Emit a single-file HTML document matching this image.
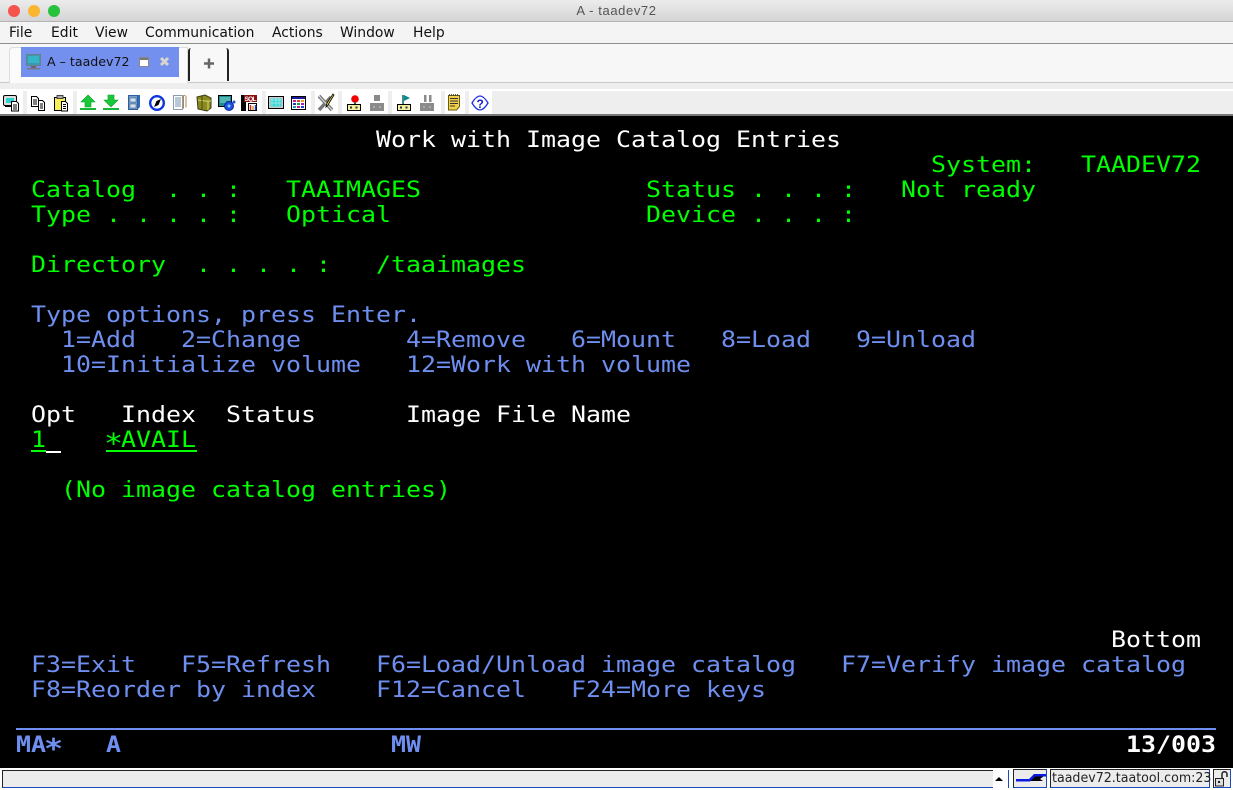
<!DOCTYPE html>
<html><head><meta charset="utf-8"><title>A - taadev72</title>
<style>
html,body{margin:0;padding:0;width:1233px;height:790px;overflow:hidden;background:#eee}
#a{position:relative;width:1233px;height:790px;overflow:hidden}
.box{position:absolute}
.r{position:absolute;left:16px;margin-top:1px;white-space:pre;font:22px/25px "DejaVu Sans Mono","Liberation Mono",monospace;height:25px;transform:scaleX(1.1325);transform-origin:0 0}
.g{color:#00ff00}.w{color:#fff}.b{color:#6f8ff0}
.s{display:inline-block;width:13.245px;font-size:28px;line-height:0;position:relative;top:6px;text-indent:-1.8px}
.m{position:absolute;top:24px;font:13.9px/18px "DejaVu Sans","Liberation Sans",sans-serif;color:#111;white-space:pre}
</style></head><body><div id="a">
<!-- title bar -->
<div class="box" style="left:0;top:0;width:1233px;height:22px;background:linear-gradient(#ececec,#d4d4d4);border-bottom:1px solid #b4b4b4;box-sizing:border-box"></div>
<div class="box" style="left:8px;top:5px;width:12px;height:12px;border-radius:50%;background:#f5544d"></div>
<div class="box" style="left:28px;top:5px;width:12px;height:12px;border-radius:50%;background:#fbb52f"></div>
<div class="box" style="left:48px;top:5px;width:12px;height:12px;border-radius:50%;background:#28c13c"></div>
<div class="box" style="left:0;top:3px;width:1233px;text-align:center;font:13px/16px 'Liberation Sans',sans-serif;letter-spacing:.6px;color:#555">A - taadev72</div>
<!-- menu -->
<div class="box" style="left:0;top:22px;width:1233px;height:21px;background:#f4f4f4;border-bottom:1px solid #8e8e8e"></div>
<div class="m" style="left:9px">File</div><div class="m" style="left:51px">Edit</div><div class="m" style="left:95px">View</div><div class="m" style="left:145px">Communication</div><div class="m" style="left:272px">Actions</div><div class="m" style="left:340px">Window</div><div class="m" style="left:413px">Help</div>
<!-- tabs -->
<div class="box" style="left:0;top:44px;width:1233px;height:39px;background:#f7f7f7;border-bottom:1px solid #c8c8c8;box-sizing:border-box"></div>
<div class="box" style="left:9px;top:47px;width:179px;height:36px;background:#fbfbfb;border:1px solid #ddd;border-bottom:0;border-radius:4px 0 0 0;box-sizing:border-box"></div>
<div class="box" style="left:21px;top:47px;width:158px;height:30px;background:#7390ee"></div>
<div class="box" style="left:47px;top:53px;font:12.6px/18px 'DejaVu Sans',sans-serif;color:#111;white-space:pre">A – taadev72</div>
<div class="box" style="left:188px;top:48px;width:41px;height:33px;border-left:2px solid #222;border-right:2px solid #222;box-sizing:border-box;border-radius:3px 3px 0 0;background:#f8f8f8"></div>
<div class="box" style="left:0;top:83px;width:1233px;height:6px;background:#eeeeee"></div>
<!-- toolbar -->
<div class="box" style="left:0;top:89px;width:1233px;height:27px;background:#fff"></div>
<div class="box" style="left:492px;top:91px;width:741px;height:25px;background:#eeeeee"></div>
<div class="box" style="left:23px;top:91px;width:4px;height:25px;background:#eee"></div>
<div class="box" style="left:73px;top:91px;width:4px;height:25px;background:#eee"></div>
<div class="box" style="left:262px;top:91px;width:4px;height:25px;background:#eee"></div>
<div class="box" style="left:311px;top:91px;width:4px;height:25px;background:#eee"></div>
<div class="box" style="left:338px;top:91px;width:4px;height:25px;background:#eee"></div>
<div class="box" style="left:388px;top:91px;width:4px;height:25px;background:#eee"></div>
<div class="box" style="left:441px;top:91px;width:4px;height:25px;background:#eee"></div>
<div class="box" style="left:465px;top:91px;width:4px;height:25px;background:#eee"></div>
<!-- terminal -->
<div class="box" style="left:0;top:114px;width:1233px;height:2px;background:#777"></div>
<div class="box" style="left:0;top:116px;width:1233px;height:652px;background:#000"></div>
<div class="r w" style="top:127px">                        Work with Image Catalog Entries</div>
<div class="r g" style="top:152px">                                                             System:   TAADEV72</div>
<div class="r g" style="top:177px"> Catalog  . . :   TAAIMAGES               Status . . . :   Not ready</div>
<div class="r g" style="top:202px"> Type . . . . :   Optical                 Device . . . :</div>
<div class="r g" style="top:252px"> Directory  . . . . :   /taaimages</div>
<div class="r b" style="top:302px"> Type options, press Enter.</div>
<div class="r b" style="top:327px">   1=Add   2=Change       4=Remove   6=Mount   8=Load   9=Unload</div>
<div class="r b" style="top:352px">   10=Initialize volume   12=Work with volume</div>
<div class="r w" style="top:402px"> Opt   Index  Status      Image File Name</div>
<div class="r g" style="top:427px"> 1</div>
<div class="box" style="left:31px;top:450px;width:15px;height:2px;background:#00ff00"></div>
<div class="box" style="left:46px;top:451px;width:15px;height:2px;background:#fff"></div>
<div class="r g" style="top:427px">      <span class="s">*</span>AVAIL</div>
<div class="box" style="left:106px;top:450px;width:91px;height:2px;background:#00ff00"></div>
<div class="r g" style="top:477px">   (No image catalog entries)</div>
<div class="r w" style="top:627px">                                                                         Bottom</div>
<div class="r b" style="top:652px"> F3=Exit   F5=Refresh   F6=Load/Unload image catalog   F7=Verify image catalog</div>
<div class="r b" style="top:677px"> F8=Reorder by index    F12=Cancel   F24=More keys</div>
<div class="box" style="left:16px;top:728px;width:1200px;height:2px;background:#6f8ff0"></div>
<div class="r b" style="top:732px;font-weight:bold">MA<span class="s">*</span>   A                  MW</div>
<div class="r w" style="top:732px;font-weight:bold">                                                                          13/003</div>
<!-- status bar -->
<div class="box" style="left:0;top:768px;width:1233px;height:22px;background:#fff"></div>
<div class="box" style="left:2px;top:770px;width:1007px;height:18px;background:#ececec;border-left:1px solid #222;border-top:1px solid #222;border-bottom:1px solid #1b49c0;box-sizing:border-box"></div>
<div class="box" style="left:993px;top:770px;width:16px;height:18px;background:#fff;border-right:1px solid #1b49c0;box-sizing:border-box"></div>
<div class="box" style="left:1013px;top:769px;width:34px;height:19px;background:#ececec;border:1px solid #1b49c0;border-top-color:#222;border-left-color:#222;box-sizing:border-box"></div>
<div class="box" style="left:1050px;top:769px;width:160px;height:19px;background:#ececec;border:1px solid #1b49c0;border-top-color:#222;border-left-color:#222;box-sizing:border-box"></div>
<div class="box" style="left:1052px;top:770px;font:13.3px/17px 'DejaVu Sans',sans-serif;color:#222;white-space:pre;transform:scaleX(.95);transform-origin:0 0">taadev72.taatool.com:23</div>
<div class="box" style="left:1213px;top:769px;width:18px;height:19px;background:#ececec;border:1px solid #1b49c0;border-top-color:#222;border-left-color:#222;box-sizing:border-box"></div>
<!-- icons -->
<svg class="box" style="left:0;top:0" width="1233" height="790" viewBox="0 0 1233 790">
<!-- tab icons -->
<rect x="26.500" y="54.500" width="14" height="11" fill="#3c9ab0" stroke="#6d7f88"/><rect x="28" y="56" width="11" height="7" fill="#35b4c8"/><rect x="31" y="66" width="5" height="2" fill="#667"/><rect x="27" y="68" width="13" height="1.500" fill="#778"/>
<rect x="139.500" y="57.500" width="9" height="9" fill="#fff" stroke="#888"/><rect x="140" y="58" width="8" height="2" fill="#777"/>
<path d="M161 58l7 7m0-7l-7 7" stroke="#d8d4d0" stroke-width="3"/>
<path d="M204 63.500h10M209 58.500v10" stroke="#666" stroke-width="2.500"/>
<!-- 1 monitor + doc -->
<rect x="3.500" y="95.500" width="13" height="10" rx="1.500" fill="#ddd" stroke="#000"/><rect x="6" y="98" width="8" height="5" fill="#2ed0d0"/><path d="M5 106.500h8" stroke="#000"/>
<path d="M11.500 101.500h5l2 2v7.500h-7z" fill="#fff" stroke="#000"/><path d="M13 105h4M13 107h4M13 109h4" stroke="#000"/>
<!-- 2 copy -->
<path d="M31.500 96.500h5l2 2v8h-7z" fill="#fff" stroke="#000"/><path d="M33 100h4M33 102h4M33 104h4" stroke="#000"/>
<path d="M38.500 100.500h4l2 2v8h-6z" fill="#fff" stroke="#000"/><path d="M40 104h3M40 106h3M40 108h3" stroke="#000"/>
<!-- 3 paste -->
<rect x="54.500" y="97.500" width="11" height="13" fill="#f7f05a" stroke="#000"/><rect x="57" y="95.500" width="6" height="3" fill="#aaa" stroke="#444"/>
<path d="M61.500 101.500h4l2 2v7.500h-6z" fill="#fff" stroke="#000"/><path d="M63 104.500h3M63 106.500h3M63 108.500h3" stroke="#000"/>
<!-- 4 up -->
<path d="M88 95l7 7h-4v5h-6v-5h-4z" fill="#18c838" stroke="#0a9a28" stroke-width=".6"/><rect x="80" y="108" width="16" height="2" fill="#15b535"/>
<!-- 5 down -->
<path d="M108 95h6v5h4l-7 7-7-7h4z" fill="#18c838" stroke="#0a9a28" stroke-width=".6"/><rect x="103" y="108" width="16" height="2" fill="#15b535"/>
<!-- 6 cabinet -->
<rect x="128.500" y="95.500" width="9" height="14" fill="#6f9fd0" stroke="#2f5f9f"/><rect x="130" y="98" width="6" height="4" fill="#d0e0f0" stroke="#456" stroke-width=".5"/><rect x="130" y="104" width="6" height="4" fill="#d0e0f0" stroke="#456" stroke-width=".5"/><path d="M138 95l2 0v12l-2 2z" fill="#2f6fb0"/>
<!-- 7 compass -->
<circle cx="157" cy="103" r="6.800" fill="#fff" stroke="#0a35e0" stroke-width="2.400"/><path d="M161 99l-2.500 6-4.500 2 2.500-6z" fill="#000"/>
<!-- 8 doc -->
<rect x="173.500" y="95.500" width="9" height="14" fill="#fff" stroke="#8a9ab0"/><path d="M175 98h6M175 100h6M175 102h6M175 104h6M175 106h6" stroke="#7090b0"/><path d="M183.500 95.500h1.500M183.500 95.500v13M186 95.500v12" stroke="#b08a4a" fill="none"/>
<!-- 9 barrels -->
<path d="M197 97l8-2 6 3v10l-4 3-9-2z" fill="#8a8a20" stroke="#3a3a10"/><path d="M205 101h6M208 101v9M198 100l7 1" stroke="#d8d870" fill="none"/><path d="M202 96v13" stroke="#4a4a10"/>
<!-- 10 monitor gear -->
<rect x="218.500" y="95.500" width="13" height="11" fill="#1f8a8a" stroke="#000"/><path d="M220 98h10M220 100h10M220 102h6" stroke="#7fe0e0"/>
<circle cx="229" cy="106" r="4.500" fill="#1a55e0" stroke="#0a2a90"/><circle cx="229" cy="106" r="1.500" fill="#9cc0ff"/>
<circle cx="234" cy="102" r="1.500" fill="#1a55e0"/>
<!-- 11 SQL -->
<rect x="241" y="95" width="5" height="16" fill="#000"/><rect x="244" y="95" width="13" height="7" fill="#8a1010"/>
<text x="244.500" y="101" font-family="Liberation Sans,sans-serif" font-size="6.500" font-weight="bold" fill="#fff" textLength="12">SQL</text>
<rect x="248.500" y="103.500" width="8" height="7" fill="#fff" stroke="#000"/><path d="M250.500 105v5" stroke="#e02020" stroke-width="1.500"/><path d="M253 106v4" stroke="#e0a020" stroke-width="1.500"/><path d="M255.500 105v5" stroke="#2040d0" stroke-width="1.500"/>
<!-- 12 monitor -->
<rect x="268.500" y="96.500" width="15" height="12" fill="#ccc" stroke="#000"/><rect x="270.500" y="98.500" width="11" height="8" fill="#33d4d4"/><path d="M271 100h10M271 103h10M272 98v8M276 98v8M279 98v8" stroke="#b0f0f0" stroke-width=".7"/>
<!-- 13 calendar -->
<rect x="291.500" y="96.500" width="14" height="13" fill="#fff" stroke="#000"/><rect x="292" y="97" width="13" height="2" fill="#1a1a9a"/>
<g><rect x="293" y="100" width="3" height="2" fill="#c02090"/><rect x="297" y="100" width="3" height="2" fill="#e04030"/><rect x="301" y="100" width="3" height="2" fill="#e0a020"/><rect x="293" y="103" width="3" height="2" fill="#2040d0"/><rect x="297" y="103" width="3" height="2" fill="#20a040"/><rect x="301" y="103" width="3" height="2" fill="#a020c0"/><rect x="293" y="106" width="3" height="2" fill="#20a0a0"/><rect x="297" y="106" width="3" height="2" fill="#c02090"/><rect x="301" y="106" width="3" height="2" fill="#2040d0"/></g>
<!-- 14 tools -->
<path d="M319 96l13 14M331 97l-12 13" stroke="#777" stroke-width="3.500" fill="none"/><path d="M319 96l13 14" stroke="#ddd" stroke-width="1"/><path d="M334 95l-6 10-2 2 1-4 6-9z" fill="#f0e040" stroke="#000" stroke-width=".8"/>
<!-- 15 tape red -->
<circle cx="355" cy="99" r="3.800" fill="#f00000"/><rect x="354" y="102" width="2" height="3" fill="#555"/>
<rect x="347.500" y="104.500" width="13" height="6" fill="#f0f0a0" stroke="#000"/><rect x="350" y="106.500" width="2" height="2" fill="#333"/><rect x="355.500" y="106.500" width="2" height="2" fill="#333"/>
<!-- 16 gray -->
<rect x="374" y="95" width="6" height="6" fill="#8a8a8a"/><rect x="370" y="103" width="14" height="8" fill="#8a8a8a"/><rect x="373" y="106.500" width="2" height="1" fill="#ccc"/><rect x="379" y="106.500" width="2" height="1" fill="#ccc"/>
<!-- 17 flag -->
<path d="M403 95v9" stroke="#066" stroke-width="1.500"/><path d="M404 95l6 3-6 3z" fill="#0a8a8a"/>
<rect x="397.500" y="104.500" width="13" height="6" fill="#f0f0a0" stroke="#000"/><rect x="400" y="106.500" width="2" height="2" fill="#333"/><rect x="405.500" y="106.500" width="2" height="2" fill="#333"/>
<!-- 18 gray pause -->
<rect x="424" y="95" width="2.500" height="7" fill="#8a8a8a"/><rect x="429" y="95" width="2.500" height="7" fill="#8a8a8a"/><rect x="420" y="103" width="14" height="8" fill="#8a8a8a"/><rect x="423" y="106.500" width="2" height="1" fill="#ccc"/><rect x="429" y="106.500" width="2" height="1" fill="#ccc"/>
<!-- 19 notepad -->
<path d="M448.500 95.500h11v11l-3 3.500h-8z" fill="#f2d24a" stroke="#6a5a10"/><path d="M450 98.500h8M450 101h8M450 103.500h8M450 106h5" stroke="#333"/><path d="M449 95h10" stroke="#333" stroke-dasharray="1 1" stroke-width="1.500"/>
<!-- 20 eye -->
<path d="M472 103c3-5 6-7 8-7s5 2 8 7c-3 5-6 7-8 7s-5-2-8-7z" fill="#fff" stroke="#1a30e0" stroke-width="1.300"/>
<text x="476.500" y="108" font-family="Liberation Sans,sans-serif" font-size="12" font-weight="bold" fill="#1a1ad0">?</text>
<!-- status icons -->
<path d="M995 781l4-4 4 4z" fill="#000"/>
<path d="M1030 781l5-5h9l-4 3 3 2z" fill="#000"/>
<path d="M1016 779h13l5-5h12v2.500h-11l-5 5h-14z" fill="#0a1adf"/>
<rect x="1215.500" y="778.500" width="8" height="7.500" fill="#ddd" stroke="#222"/><path d="M1222 778v-4c0-3 5-3 5 0v3" fill="none" stroke="#222" stroke-width="1.500"/><rect x="1218" y="781" width="2" height="2" fill="#222"/>
</svg>
</div></body></html>
